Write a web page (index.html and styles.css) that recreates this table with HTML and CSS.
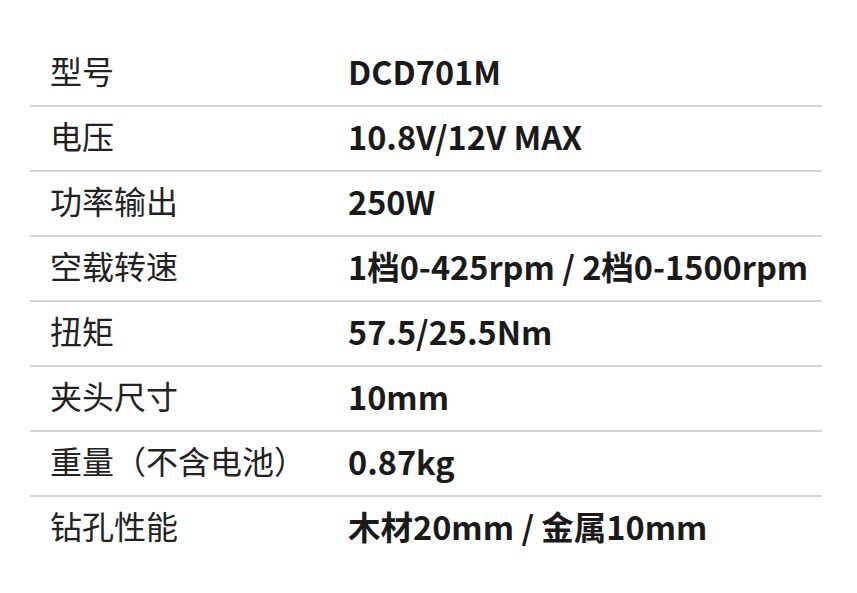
FILE: index.html
```html
<!DOCTYPE html>
<html lang="zh-CN">
<head>
<meta charset="utf-8">
<link rel="stylesheet" href="styles.css">
</head>
<body>
<div class="spec">
  <div class="row"><div class="label">型号</div><div class="value">DCD701M</div></div>
  <div class="row"><div class="label">电压</div><div class="value">10.8V/12V MAX</div></div>
  <div class="row"><div class="label">功率输出</div><div class="value">250W</div></div>
  <div class="row"><div class="label">空载转速</div><div class="value">1档0-425rpm / 2档0-1500rpm</div></div>
  <div class="row"><div class="label">扭矩</div><div class="value">57.5/25.5Nm</div></div>
  <div class="row"><div class="label">夹头尺寸</div><div class="value">10mm</div></div>
  <div class="row"><div class="label">重量（不含电池）</div><div class="value">0.87kg</div></div>
  <div class="row last"><div class="label">钻孔性能</div><div class="value">木材20mm / 金属10mm</div></div>
</div>
</body>
</html>
```
FILE: styles.css
```css
html, body {
  margin: 0;
  padding: 0;
  background: #ffffff;
}
body {
  font-family: "Noto Sans CJK SC", "Noto Sans", sans-serif;
  color: #1e1e1e;
}
.spec {
  margin: 42px 0 0 30px;
  width: 792px;
  display: flex;
  flex-direction: column;
}
.row {
  display: flex;
  align-items: center;
  box-sizing: content-box;
  height: 57px;
  padding-bottom: 6px;
  border-bottom: 2px solid #d4d4d4;
}
.row.last {
  border-bottom: none;
}
.label {
  width: 298px;
  padding-left: 20px;
  font-size: 32px;
  font-weight: 400;
  line-height: 1.2;
  color: #222222;
  white-space: nowrap;
}
.value {
  font-size: 32.5px;
  font-weight: 700;
  line-height: 1.2;
  color: #1a1a1a;
  white-space: nowrap;
}
```
